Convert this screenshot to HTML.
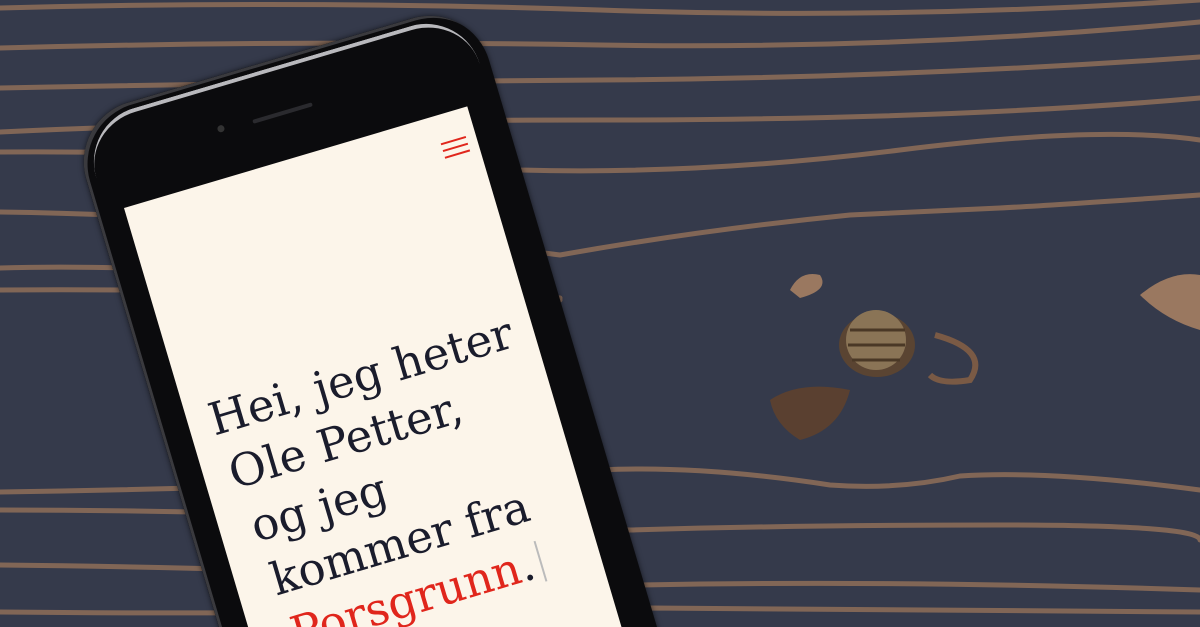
<!DOCTYPE html>
<html><head><meta charset="utf-8"><style>
html,body{margin:0;padding:0;width:1200px;height:627px;overflow:hidden}
body{position:relative;background:#353a4b}
svg.bg{position:absolute;left:0;top:0}
.wrap{position:absolute;left:0;top:0;width:1200px;height:627px;overflow:hidden}
.phone{position:absolute;left:124px;top:208px;width:0;height:0;transform:rotate(-16.5deg);transform-origin:0 0}
.body{position:absolute;left:-28px;top:-100px;width:420px;height:900px;background:#0b0b0d;border-radius:62px 62px 0 0;box-shadow:inset 3px 3px 0 #3a3a3e, 0 0 6px rgba(0,0,0,.6)}
.gloss{position:absolute;left:-18px;top:-93px;width:400px;height:60px;border-top:4px solid #d8d8dc;border-radius:56px 56px 0 0;opacity:.85}
.screen{position:absolute;left:0;top:0;width:358px;height:760px;background:#fcf5ea;overflow:hidden}
.spk{position:absolute;left:148px;top:-48px;width:62px;height:4px;background:#2a2a2e;border-radius:2px}
.cam{position:absolute;left:112px;top:-52px;width:7px;height:7px;background:#333;border-radius:50%}
.ham{position:absolute;left:322px;top:28px;width:26px}
.ham i{display:block;height:2px;background:#e0261c;margin-bottom:5px}
.txt{position:absolute;left:22px;top:200px;font-family:"DejaVu Serif","Liberation Serif",serif;font-size:45px;line-height:57px;color:#1a1c2c;white-space:nowrap;letter-spacing:0}
.txt div:nth-child(2){margin-left:4px}
.txt div:nth-child(3){margin-left:10px}
.txt div:nth-child(4){margin-left:14px}
.txt div:nth-child(5){margin-left:18px}
.red{color:#e0261c}
.cur{display:inline-block;width:2px;height:42px;background:#bbb;vertical-align:-6px;margin-left:6px}
</style></head><body>
<div class="wrap">
<svg class="bg" width="1200" height="627" viewBox="0 0 1200 627">
<g fill="none" stroke="#8a6b58" stroke-width="5" stroke-linecap="round" opacity=".9">
<path d="M0 8 Q300 0 600 10 T1200 0"/>
<path d="M0 48 Q300 40 600 45 T1200 22"/>
<path d="M0 88 Q300 82 600 80 T1200 57"/>
<path d="M0 132 Q250 120 600 120 T1200 98"/>
<path d="M0 152 Q200 150 520 170 Q700 175 900 150 T1200 140"/>
<path d="M0 212 Q250 215 560 255 Q700 230 850 215 Q960 210 1000 208 T1200 195"/>
<path d="M0 268 Q200 262 560 298"/>
<path d="M0 290 Q200 288 560 300"/>
<path d="M0 492 Q300 488 600 470 Q700 465 830 485 Q900 490 960 476 Q1050 470 1200 490"/>
<path d="M0 510 Q300 510 630 530 Q800 525 1000 525 T1200 540"/>
<path d="M0 565 Q300 568 640 585 Q900 580 1200 590"/>
<path d="M0 612 Q300 615 650 608 Q900 610 1200 612"/>
</g>
<path d="M1140 295 Q1170 270 1200 275 L1200 330 Q1165 320 1140 295Z" fill="#9a7860"/>
<path d="M790 290 Q800 270 820 275 Q830 290 800 298Z" fill="#9a7860"/>
<ellipse cx="877" cy="345" rx="38" ry="32" fill="#5a4432"/>
<circle cx="876" cy="340" r="30" fill="#8a7456"/>
<g stroke="#4a3826" stroke-width="3"><line x1="850" y1="330" x2="905" y2="330"/><line x1="848" y1="345" x2="905" y2="345"/><line x1="852" y1="360" x2="900" y2="360"/></g>
<path d="M935 335 Q990 350 970 380 Q940 385 930 375" fill="none" stroke="#7a5a45" stroke-width="6"/>
<path d="M770 400 Q800 380 850 390 Q840 430 800 440 Q775 425 770 400Z" fill="#5a4030"/>
</svg>
<div class="phone">
<div class="body"></div>
<div class="gloss"></div>
<div class="cam"></div>
<div class="spk"></div>
<div class="screen">
<div class="ham"><i></i><i></i><i></i></div>
<div class="txt"><div>Hei, jeg heter</div><div>Ole Petter,</div><div>og jeg</div><div>kommer fra</div><div><span class="red">Porsgrunn</span>.<span class="cur"></span></div></div>
</div>
</div>
</div>
</body></html>
